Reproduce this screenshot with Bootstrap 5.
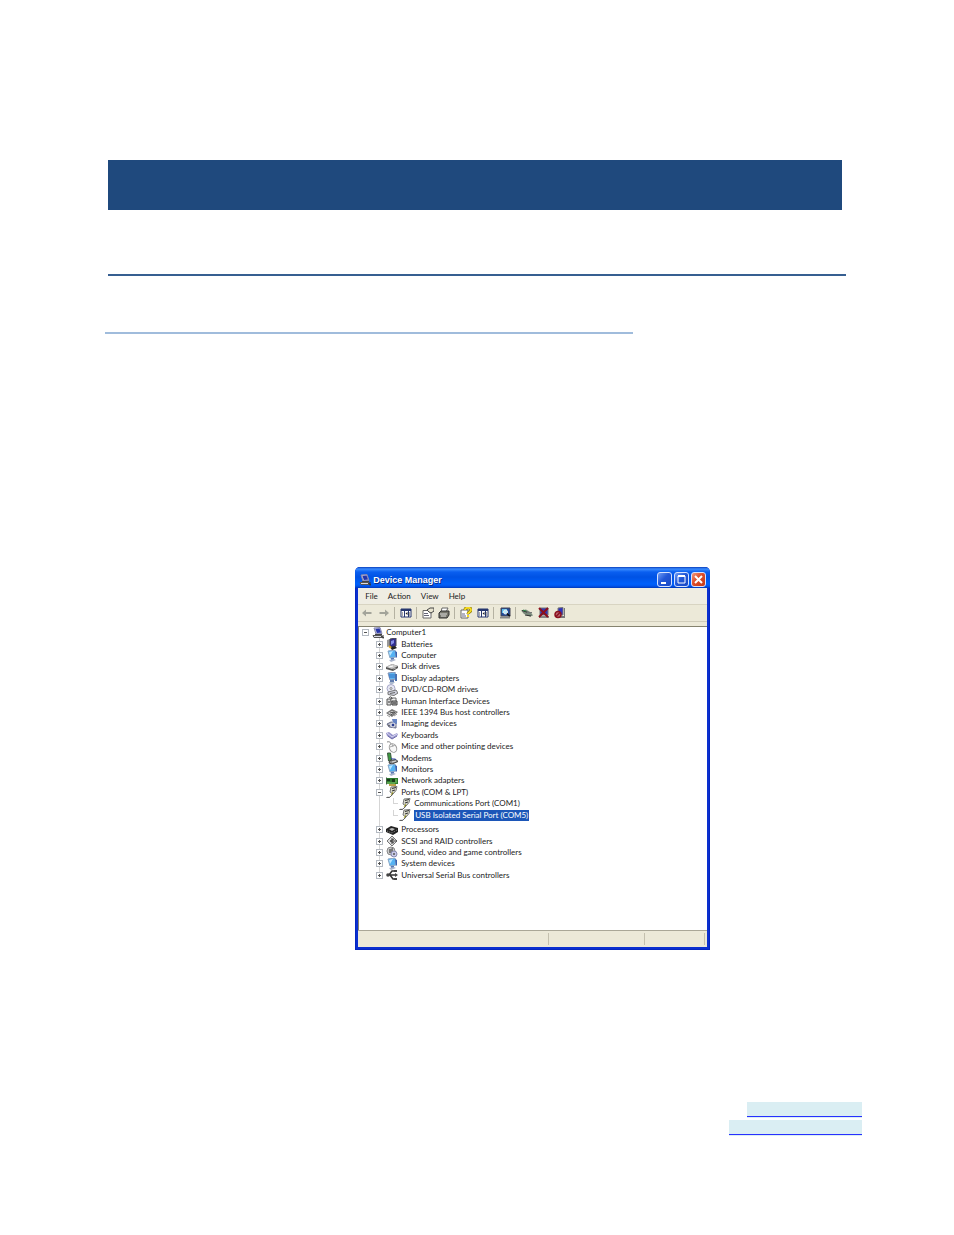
<!DOCTYPE html>
<html lang="en">
<head>
<meta charset="utf-8">
<meta name="viewport" content="width=device-width, initial-scale=1">
<title>Device Manager</title>
<link href="https://cdn.jsdelivr.net/npm/bootstrap@5.3.0/dist/css/bootstrap.min.css" rel="stylesheet">
<style>
  body { background: #fff; font-family: "Lato", "Open Sans", sans-serif; font-variant-ligatures: none; }
  .sheet { padding: 160px 108px 0; }
  .title-band { height: 50px; margin-right: 4px; background: #1f497d; }
  .rule-dark { height: 2px; margin-top: 64px; background: #365f91; }
  .rule-light { height: 2px; width: 528px; max-width: 100%; margin: 56px 0 0 -3px; background: #a0bcdc; }
  /* window frame */
  .xp-window { width: 355px; max-width: 100%; margin: 233px 0 0 33.5%; border-radius: 5px 5px 0 0; background: #0a2fd0; border: solid #0426c0; border-width: 0 1px 1px; padding: 0 2px 2px; font-size: 8px; line-height: 11px; color: #222; }
  .xp-title { height: 21px; margin: 0 -3px; padding: 0 4px 0 4px; gap: 2px; border-radius: 5px 5px 0 0; background: linear-gradient(#0a3fbb 0, #3a8cff 2px, #0a5ff0 5px, #0052e4 10px, #0060fb 17px, #0055ee 19px, #0038b8 21px); }
  .xp-title h1 { font: bold 9px/12px "Liberation Sans", sans-serif; color: #fff; text-shadow: 1px 1px 0 #0b2c88; }
  .cap-group { gap: 2px; }
  .cap-btn { width: 15px; height: 15px; border: 1px solid #d5e2ff; border-radius: 3px; background: linear-gradient(135deg, #6f9cf5, #2157d8 45%, #1b49c4); }
  .cap-close { background: linear-gradient(135deg, #f09a80, #dd4c28 45%, #c33a16); }
  .xp-menu button, .xp-tools button, .cap-btn { padding: 0; color: inherit; }
  .xp-menu button, .xp-tools button { border: 0; background: none; }
  .xp-menu { height: 17px; padding: 0 7px; gap: 10px; background: #efede3; border-bottom: 1px solid #d8d4c2; }
  .xp-tools { height: 17px; background: #ece9d8; border-bottom: 1px solid #d0ccba; }
  .xp-tools button { width: 17px; }
  .xp-tools button.tight { width: 16px; }
  .xp-tools .divider { width: 1px; height: 12px; margin: 0 2px; background: #b5b2a2; }
  .pane-wrap { background: #ece9d8; padding-top: 4px; }
  .pane { min-height: 304px; background: #fff; border: solid #85836f; border-width: 1px 0 0 1px; }
  svg { display: block; flex: none; }
  /* device tree */
  .tree { height: 254px; background: linear-gradient(#d5d5d5, #d5d5d5) 20px 11px / 1px 238px no-repeat; }
  .tree li { flex: 1 1 0; min-height: 0; padding-left: 17px; gap: 3px; white-space: nowrap; }
  .tree li.root { padding-left: 3px; }
  .tree li.root span { margin-left: -1px; }
  .tree li.leaf { padding-left: 34px; background: linear-gradient(#d5d5d5, #d5d5d5) 34px 0 / 1px 6px no-repeat; gap: 3px; }
  .tree li.leaf::before { content: ""; width: 5px; height: 1px; background: #d5d5d5; margin-right: -2px; }
  .tree li.after-leaf { margin-top: 3px; }
  .knob { width: 7px; height: 7px; padding: 0; flex: none; border: 1px solid #b4bac2; background: linear-gradient(#555, #555) center / 3px 1px no-repeat, linear-gradient(#555, #555) center / 1px 3px no-repeat, #fff; }
  .knob.open { background: linear-gradient(#555, #555) center / 3px 1px no-repeat, #fff; }
  .picked { background: #1c56b8; color: #fff; padding: 0 1px; }
  .xp-status { height: 17px; background: #ece9d8; border-top: 1px solid #aaa797; }
  .xp-status div { border-right: 1px solid #c4c0ae; margin: 2px 0; }
  .xp-status .s1 { flex: 191; } .xp-status .s2 { flex: 95; } .xp-status .s3 { flex: 60; margin-right: 2px; }
  /* contact links */
  .contact { padding: 152px 92px 99px; }
  .contact a { height: 16px; background: #daeef3; }
  .contact a span { display: block; height: 15px; border-bottom: 1px solid #2830ff; }
  .contact .site { width: 115px; margin-bottom: 2px; }
  .contact .mail { width: 133px; }
</style>
</head>
<body>
<svg width="0" height="0" class="position-absolute" aria-hidden="true">
  <symbol id="pc" viewBox="0 0 12 12"><path d="M2 1l6-.5 2 6-6 .5z" fill="#b8b9d8" stroke="#8889b0"/><path d="M3.500 2l4-.5 1.500 4-4 .5z" fill="#2433a8"/><path d="M1 8.500h8.500l1 2H2z" fill="#d9d9e2" stroke="#555"/><path d="M3 7.500h7" stroke="#444"/><path d="M9 9l3 2M11 8v3.500" stroke="#333"/></symbol>
  <symbol id="batt" viewBox="0 0 12 12"><path d="M1 2l3-1v7l-3 1z" fill="#999"/><path d="M4 1l6-1v8l-6 1z" fill="#302d91" stroke="#445"/><path d="M5 3l3-1v3l-3 2z" fill="#8690e6"/><path d="M4 9l5-1 2 2-5 2z" fill="#222"/><path d="M3 8l2 2" stroke="#dca827" stroke-width="2"/></symbol>
  <symbol id="mon" viewBox="0 0 12 12"><path d="M2 1l7-1 1 7-6 1z" fill="#55b2f3" stroke="#8ba6c4"/><path d="M3 2l4-1-3 5z" fill="#b9e6ff"/><path d="M9 1l2 1v5l-1 1z" fill="#3761b0"/><path d="M5 8h3v2H5z" fill="#5a79b6"/><path d="M3 10l5-1 2 1-5 2z" fill="#a9b5cd"/></symbol>
  <symbol id="disk" viewBox="0 0 12 12"><path d="M0 6l6-3 6 2v2L7 10 0 8z" fill="#555"/><path d="M0 6l6-3 6 2-6 3z" fill="#c9c9c9"/><path d="M3 6l4-1" stroke="#fff"/><path d="M7 8l3-1" stroke="#aaa"/></symbol>
  <symbol id="disp" viewBox="0 0 12 12"><path d="M2 1l7-1 1 7-6 1z" fill="#63b5ee" stroke="#8291b4"/><path d="M3 3h6M3 5h6" stroke="#2a70c8"/><path d="M9 2h2v7H9z" fill="#4970b0"/><path d="M4 8h4v2H4z" fill="#617cae"/><path d="M3 10h6l-2 2H4z" fill="#aebbd0"/></symbol>
  <symbol id="cd" viewBox="0 0 12 12"><circle cx="5" cy="4.500" r="4" fill="#e6e7f4" stroke="#a6a7c8"/><circle cx="5" cy="4.500" r="1" fill="#fff" stroke="#888"/><path d="M2 8l8-2 2 3-4 2.500-6-1z" fill="#cdcfdb" stroke="#777"/><path d="M4 9.500l5-1" stroke="#666"/></symbol>
  <symbol id="hid" viewBox="0 0 12 12"><path d="M1 4h4v6H1z" fill="#ddd" stroke="#555"/><path d="M5 3h5v4H5z" fill="#eee" stroke="#666"/><path d="M3 3c1-2 3-1 3 1" fill="none" stroke="#333"/><path d="M6 6h5v4H6z" fill="#b1b1b1" stroke="#444"/><path d="M7 8h3M2 7h2" stroke="#333"/></symbol>
  <symbol id="fire" viewBox="0 0 12 12"><path d="M0 6l6-4 6 3-6 5z" fill="#777"/><path d="M2 6l4-2 4 1-4 3z" fill="#ddd"/><path d="M4 6l4-1M5 8l4-3" stroke="#444"/><path d="M1 8l3 2M8 9l3-2" stroke="#999"/></symbol>
  <symbol id="cam" viewBox="0 0 12 12"><path d="M1 6l4-2 5 1v5l-7-1z" fill="#b9bed0" stroke="#666b88"/><path d="M6 1h5v5l-4-1z" fill="#6684c4"/><circle cx="7" cy="7" r="2" fill="#293c92" stroke="#eee"/><path d="M2 7l2 1" stroke="#555"/></symbol>
  <symbol id="key" viewBox="0 0 12 12"><path d="M0 4l3-1 4 3 4-2 1 2-6 4-5-3z" fill="#9795cc"/><path d="M1 4l5 4 5-3" fill="none" stroke="#d9d8f2"/><path d="M2 7l4 3 5-3" fill="none" stroke="#6d6ba9"/></symbol>
  <symbol id="mouse" viewBox="0 0 12 12"><path d="M1 1c3-1 4 1 4 3" fill="none" stroke="#888"/><ellipse cx="7" cy="7" rx="3.500" ry="4.500" fill="#f8f8f8" stroke="#999" transform="rotate(-25 7 7)"/><path d="M4 6l5-2M6 3l1 3" stroke="#aaa"/></symbol>
  <symbol id="modem" viewBox="0 0 12 12"><path d="M1.500 1h3l1 7-3 1z" fill="#3c9b3f" stroke="#3c5741"/><path d="M4 8.500l6-1 2 2-6 2.500-3-1z" fill="#888" stroke="#444"/><path d="M5 6c1 2 3 0 5 1.500" fill="none" stroke="#3a4cae"/><path d="M6 10l4-1" stroke="#ddd"/></symbol>
  <symbol id="net" viewBox="0 0 12 12"><path d="M0 3h12v6H0z" fill="#2b7b2e"/><path d="M1 4h3v2H1zM6 4h3v3H6z" fill="#173b1a"/><path d="M3 9h7v2H3z" fill="#baa34a"/><path d="M1 8h8M10 4v4" stroke="#8cd06f"/><path d="M0 2v8" stroke="#555"/></symbol>
  <symbol id="port" viewBox="0 0 12 12"><path d="M5 1l6-.5-1 4-3 3.500-3-2z" fill="#d6d6c8" stroke="#777"/><path d="M6 2.500l4-1M6 5l3-1" stroke="#333"/><path d="M6.500 7c0 3-1 2-2 3.500s-2 .5-4 1" fill="none" stroke="#333"/><path d="M7 6l-2 3" stroke="#b7b438"/></symbol>
  <symbol id="cpu" viewBox="0 0 12 12"><path d="M0 5l5-3 7 2v4l-5 3-7-3z" fill="#222"/><path d="M3 5l3-1 3 1-3 2z" fill="#bbb"/><path d="M1 7l5 2 5-3" fill="none" stroke="#888" stroke-dasharray="1"/></symbol>
  <symbol id="scsi" viewBox="0 0 12 12"><path d="M6 1l5 5-5 5-5-5z" fill="#ddd" stroke="#777"/><path d="M8 4L4 6l4 2M6 3v6M5 6h6" fill="none" stroke="#444"/></symbol>
  <symbol id="snd" viewBox="0 0 12 12"><circle cx="5" cy="5" r="4" fill="#ccc" stroke="#888"/><path d="M3 3h2l2-2v8L5 7H3z" fill="#777"/><circle cx="8" cy="8" r="3" fill="#c8c9e6" stroke="#888ab0"/><circle cx="8" cy="8" r="1" fill="#555"/></symbol>
  <symbol id="usb" viewBox="0 0 12 12"><path d="M1 6h9M3 6l3-4h3M4 6l3 4h2" fill="none" stroke="#333" stroke-width="1.500"/><circle cx="2" cy="6" r="1.800" fill="#444"/><path d="M9 4l3 2-3 2zM8 1h3v2H8zM8 9h3v2H8z" fill="#444"/></symbol>
  <symbol id="arl" viewBox="0 0 12 12"><path d="M1 6l4-3.500V5h5.500v2H5v2.500z" fill="#a3a49a"/></symbol>
  <symbol id="arr" viewBox="0 0 12 12"><path d="M11 6L7 2.500V5H1.500v2H7v2.500z" fill="#a3a49a"/></symbol>
  <symbol id="tree" viewBox="0 0 12 12"><path d="M1 2h10v8H1z" fill="#fff" stroke="#26376f"/><path d="M1 3h10" stroke="#26376f" stroke-width="2"/><path d="M4.500 3v7M8.500 3v7" stroke="#26376f"/><path d="M7.500 5v3L5.500 6.500z" fill="#222"/><path d="M2 6h1M2 8h1M9 6h1M9 8h1" stroke="#555"/></symbol>
  <symbol id="prop" viewBox="0 0 12 12"><path d="M1 3.500h8V11H1z" fill="#fff" stroke="#666"/><path d="M2 6.500h4M2 8.500h5" stroke="#667"/><path d="M5 3l3-2h4v3l-3 2-2-1z" fill="#e8e4cf" stroke="#444"/></symbol>
  <symbol id="print" viewBox="0 0 12 12"><path d="M4 1h6L8 5H3z" fill="#fff" stroke="#666"/><path d="M1 6l2-2h8v4l-2 3H1z" fill="#77776d" stroke="#333"/><path d="M2 7h7M3 9h5" stroke="#ddd"/></symbol>
  <symbol id="help" viewBox="0 0 12 12"><path d="M1 3h7v8H1z" fill="#fff" stroke="#666"/><path d="M2 7h3M2 9h4" stroke="#668"/><path d="M5 3c0-3 6-3 6 0 0 2-3 2-3 4" fill="none" stroke="#776800" stroke-width="3"/><path d="M5 3c0-3 6-3 6 0 0 2-3 2-3 4M8 8v2" fill="none" stroke="#f5da22" stroke-width="2"/></symbol>
  <symbol id="scan" viewBox="0 0 12 12"><path d="M2 1h9v8H2z" fill="#204b9c" stroke="#445"/><path d="M3 2h5v4H3z" fill="#60bdec"/><circle cx="6.500" cy="5" r="2" fill="#b8ecff" stroke="#eee"/><path d="M8 6.500l3 3" stroke="#111" stroke-width="1.500"/><path d="M1 10.500h10" stroke="#888" stroke-width="2"/></symbol>
  <symbol id="upd" viewBox="0 0 12 12"><path d="M0 3.500l5-1 5 3 2 3-3 1-6-2.500z" fill="#7a8a7c"/><path d="M1 3.500l6 2M4 8l6 1" stroke="#333"/><path d="M2 3l3 1" stroke="#2e8b4a"/><path d="M6 5.500h5" fill="none" stroke="#777"/></symbol>
  <symbol id="dis" viewBox="0 0 12 12"><path d="M2 1h8v7H2z" fill="#3237b5" stroke="#777"/><path d="M1 10h10" stroke="#888" stroke-width="2"/><path d="M1 1l9 9M10 1L1 10" stroke="#8b101c" stroke-width="2"/></symbol>
  <symbol id="unin" viewBox="0 0 12 12"><path d="M4 1l5-.5V8H4z" fill="#2c2fbc" stroke="#777"/><path d="M10 1h1v10h-1zM5 9h6v2H5z" fill="#777"/><circle cx="4" cy="7.500" r="3" fill="#bb6670" stroke="#8b111f" stroke-width="1.500"/><path d="M2 9.500l4-4" stroke="#8b111f" stroke-width="1.500"/></symbol>
</svg>

<main class="sheet">
  <div class="title-band"></div>
  <div class="rule-dark"></div>
  <div class="rule-light"></div>

  <section class="xp-window" aria-label="Device Manager">
    <header class="xp-title d-flex align-items-center">
      <svg class="mt-1" width="12" height="12"><use href="#pc"/></svg>
      <h1 class="mb-0 me-auto mt-1">Device Manager</h1>
      <div class="cap-group d-flex mt-1">
        <button class="cap-btn" aria-label="Minimize"><svg width="13" height="13"><path d="M3 9h5v2H3z" fill="#fff"/></svg></button>
        <button class="cap-btn" aria-label="Maximize"><svg width="13" height="13"><path d="M3 3h7v7H3z" fill="none" stroke="#fff"/><path d="M3 3h7" stroke="#fff" stroke-width="2"/></svg></button>
        <button class="cap-btn cap-close" aria-label="Close"><svg width="13" height="13"><path d="M3 3l7 7M10 3l-7 7" stroke="#fff" stroke-width="2"/></svg></button>
      </div>
    </header>
    <nav class="xp-menu d-flex align-items-center">
      <button>File</button><button>Action</button><button>View</button><button>Help</button>
    </nav>
    <div class="xp-tools d-flex align-items-center">
      <button aria-label="Back"><svg class="mx-auto" width="12" height="12"><use href="#arl"/></svg></button>
      <button aria-label="Forward"><svg class="mx-auto" width="12" height="12"><use href="#arr"/></svg></button>
      <span class="divider"></span>
      <button aria-label="Show console tree"><svg class="mx-auto" width="12" height="12"><use href="#tree"/></svg></button>
      <span class="divider"></span>
      <button aria-label="Properties"><svg class="mx-auto" width="12" height="12"><use href="#prop"/></svg></button>
      <button class="tight" aria-label="Print"><svg class="mx-auto" width="12" height="12"><use href="#print"/></svg></button>
      <span class="divider"></span>
      <button aria-label="Help topics"><svg class="mx-auto" width="12" height="12"><use href="#help"/></svg></button>
      <button aria-label="Show action pane"><svg class="mx-auto" width="12" height="12"><use href="#tree"/></svg></button>
      <span class="divider"></span>
      <button aria-label="Scan for hardware changes"><svg class="mx-auto" width="12" height="12"><use href="#scan"/></svg></button>
      <span class="divider"></span>
      <button aria-label="Update driver"><svg class="mx-auto" width="12" height="12"><use href="#upd"/></svg></button>
      <button aria-label="Disable"><svg class="mx-auto" width="12" height="12"><use href="#dis"/></svg></button>
      <button class="tight" aria-label="Uninstall"><svg class="mx-auto" width="12" height="12"><use href="#unin"/></svg></button>
    </div>
    <div class="pane-wrap">
      <div class="pane">
        <ul class="tree list-unstyled mb-0 d-flex flex-column">
          <li class="root d-flex align-items-center"><button class="knob open" aria-label="Collapse"></button><svg width="12" height="12"><use href="#pc"/></svg><span>Computer1</span></li>
          <li class="d-flex align-items-center"><button class="knob" aria-label="Expand"></button><svg width="12" height="12"><use href="#batt"/></svg><span>Batteries</span></li>
          <li class="d-flex align-items-center"><button class="knob" aria-label="Expand"></button><svg width="12" height="12"><use href="#mon"/></svg><span>Computer</span></li>
          <li class="d-flex align-items-center"><button class="knob" aria-label="Expand"></button><svg width="12" height="12"><use href="#disk"/></svg><span>Disk drives</span></li>
          <li class="d-flex align-items-center"><button class="knob" aria-label="Expand"></button><svg width="12" height="12"><use href="#disp"/></svg><span>Display adapters</span></li>
          <li class="d-flex align-items-center"><button class="knob" aria-label="Expand"></button><svg width="12" height="12"><use href="#cd"/></svg><span>DVD/CD-ROM drives</span></li>
          <li class="d-flex align-items-center"><button class="knob" aria-label="Expand"></button><svg width="12" height="12"><use href="#hid"/></svg><span>Human Interface Devices</span></li>
          <li class="d-flex align-items-center"><button class="knob" aria-label="Expand"></button><svg width="12" height="12"><use href="#fire"/></svg><span>IEEE 1394 Bus host controllers</span></li>
          <li class="d-flex align-items-center"><button class="knob" aria-label="Expand"></button><svg width="12" height="12"><use href="#cam"/></svg><span>Imaging devices</span></li>
          <li class="d-flex align-items-center"><button class="knob" aria-label="Expand"></button><svg width="12" height="12"><use href="#key"/></svg><span>Keyboards</span></li>
          <li class="d-flex align-items-center"><button class="knob" aria-label="Expand"></button><svg width="12" height="12"><use href="#mouse"/></svg><span>Mice and other pointing devices</span></li>
          <li class="d-flex align-items-center"><button class="knob" aria-label="Expand"></button><svg width="12" height="12"><use href="#modem"/></svg><span>Modems</span></li>
          <li class="d-flex align-items-center"><button class="knob" aria-label="Expand"></button><svg width="12" height="12"><use href="#mon"/></svg><span>Monitors</span></li>
          <li class="d-flex align-items-center"><button class="knob" aria-label="Expand"></button><svg width="12" height="12"><use href="#net"/></svg><span>Network adapters</span></li>
          <li class="d-flex align-items-center"><button class="knob open" aria-label="Collapse"></button><svg width="12" height="12"><use href="#port"/></svg><span>Ports (COM &amp; LPT)</span></li>
          <li class="leaf d-flex align-items-center"><svg width="12" height="12"><use href="#port"/></svg><span>Communications Port (COM1)</span></li>
          <li class="leaf d-flex align-items-center"><svg width="12" height="12"><use href="#port"/></svg><span class="picked">USB Isolated Serial Port (COM5)</span></li>
          <li class="after-leaf d-flex align-items-center"><button class="knob" aria-label="Expand"></button><svg width="12" height="12"><use href="#cpu"/></svg><span>Processors</span></li>
          <li class="d-flex align-items-center"><button class="knob" aria-label="Expand"></button><svg width="12" height="12"><use href="#scsi"/></svg><span>SCSI and RAID controllers</span></li>
          <li class="d-flex align-items-center"><button class="knob" aria-label="Expand"></button><svg width="12" height="12"><use href="#snd"/></svg><span>Sound, video and game controllers</span></li>
          <li class="d-flex align-items-center"><button class="knob" aria-label="Expand"></button><svg width="12" height="12"><use href="#mon"/></svg><span>System devices</span></li>
          <li class="d-flex align-items-center"><button class="knob" aria-label="Expand"></button><svg width="12" height="12"><use href="#usb"/></svg><span>Universal Serial Bus controllers</span></li>
        </ul>
      </div>
    </div>
    <footer class="xp-status d-flex"><div class="s1"></div><div class="s2"></div><div class="s3"></div></footer>
  </section>
</main>

<footer class="contact d-flex flex-column align-items-end">
  <a class="site d-block" href="#" aria-label="Website"><span></span></a>
  <a class="mail d-block" href="#" aria-label="Email"><span></span></a>
</footer>
<script src="https://cdn.jsdelivr.net/npm/bootstrap@5.3.0/dist/js/bootstrap.bundle.min.js"></script>
</body>
</html>
